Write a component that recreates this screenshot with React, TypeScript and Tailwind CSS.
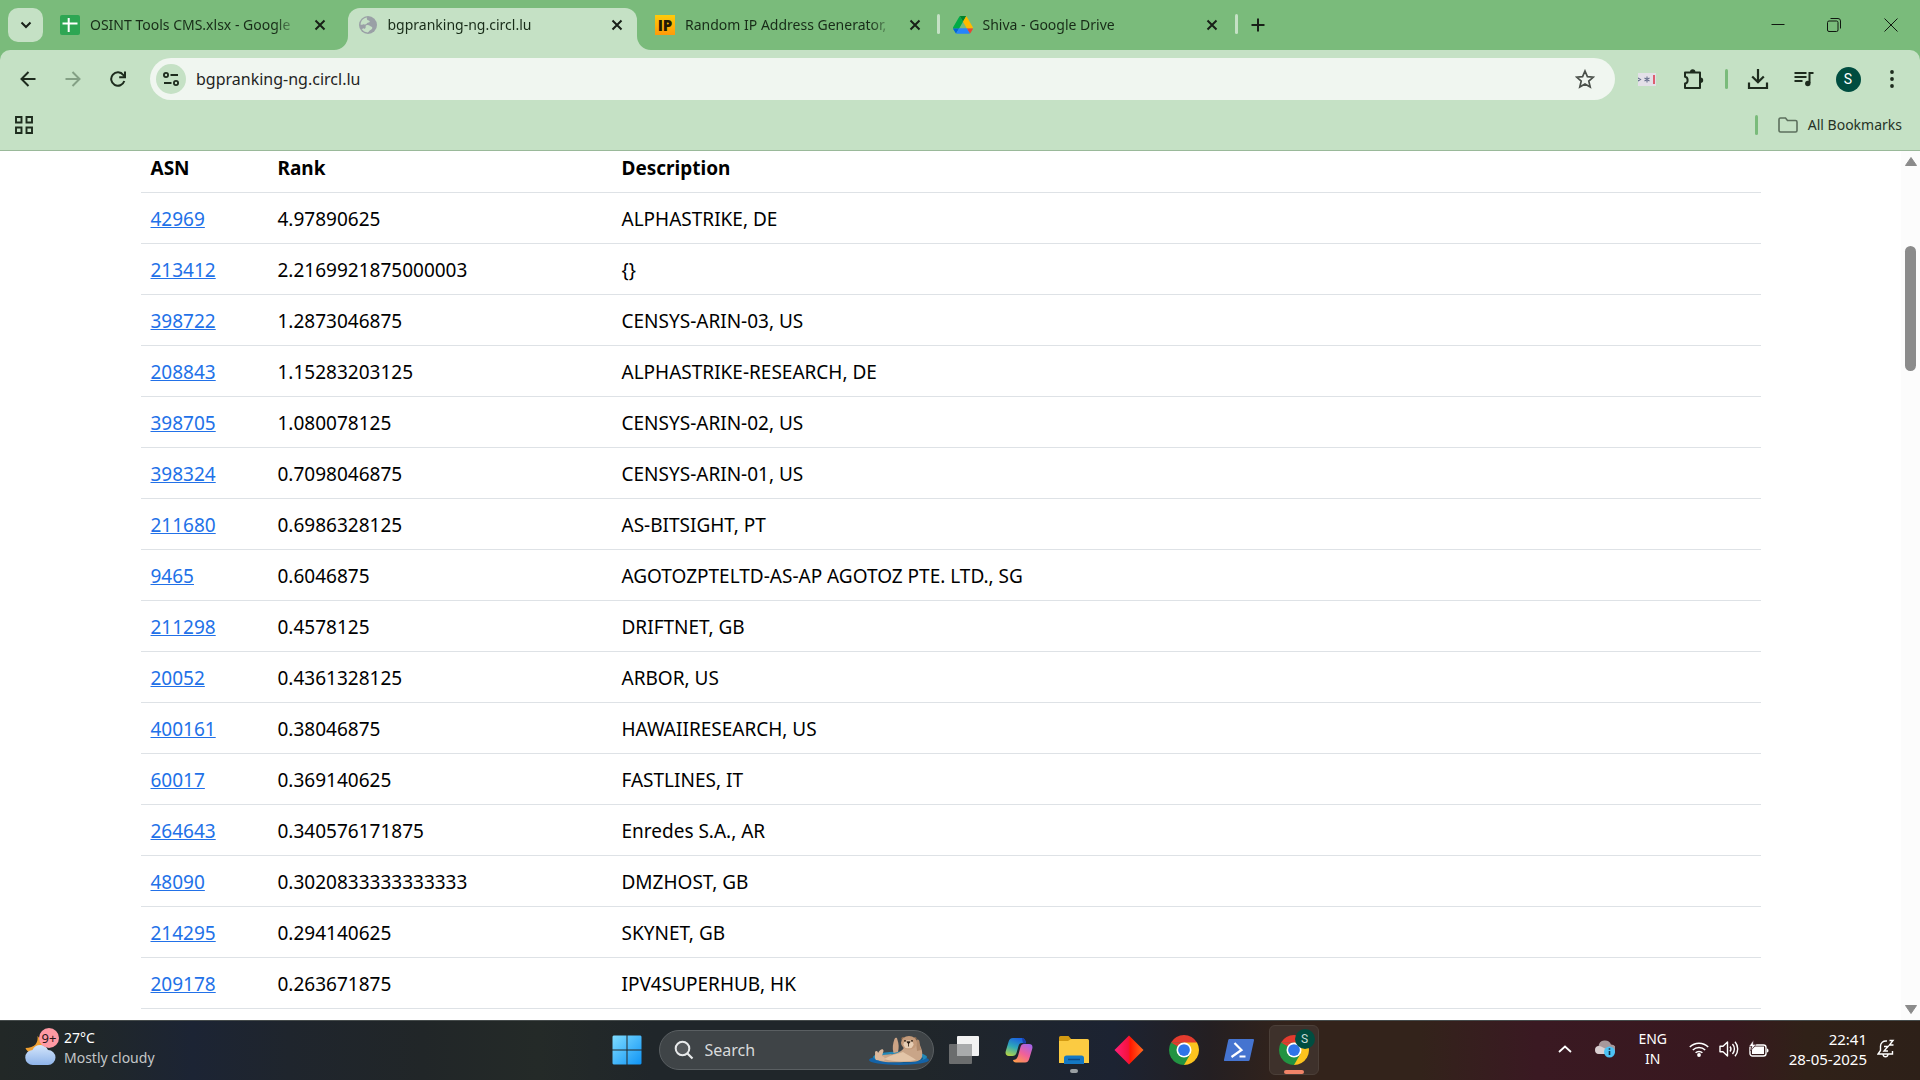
import React from "react";

type Row = { asn: string; rank: string; description: string };

const rows: Row[] = [
  { asn: "42969", rank: "4.97890625", description: "ALPHASTRIKE, DE" },
  { asn: "213412", rank: "2.2169921875000003", description: "{}" },
  { asn: "398722", rank: "1.2873046875", description: "CENSYS-ARIN-03, US" },
  { asn: "208843", rank: "1.15283203125", description: "ALPHASTRIKE-RESEARCH, DE" },
  { asn: "398705", rank: "1.080078125", description: "CENSYS-ARIN-02, US" },
  { asn: "398324", rank: "0.7098046875", description: "CENSYS-ARIN-01, US" },
  { asn: "211680", rank: "0.6986328125", description: "AS-BITSIGHT, PT" },
  { asn: "9465", rank: "0.6046875", description: "AGOTOZPTELTD-AS-AP AGOTOZ PTE. LTD., SG" },
  { asn: "211298", rank: "0.4578125", description: "DRIFTNET, GB" },
  { asn: "20052", rank: "0.4361328125", description: "ARBOR, US" },
  { asn: "400161", rank: "0.38046875", description: "HAWAIIRESEARCH, US" },
  { asn: "60017", rank: "0.369140625", description: "FASTLINES, IT" },
  { asn: "264643", rank: "0.340576171875", description: "Enredes S.A., AR" },
  { asn: "48090", rank: "0.3020833333333333", description: "DMZHOST, GB" },
  { asn: "214295", rank: "0.294140625", description: "SKYNET, GB" },
  { asn: "209178", rank: "0.263671875", description: "IPV4SUPERHUB, HK" },
];

/* ---------- favicons ---------- */

function SheetsIcon() {
  return (
    <svg viewBox="0 0 20 20" className="size-5 shrink-0" aria-hidden="true">
      <rect width="20" height="20" rx="2" fill="#2ea653" />
      <path d="M8.700 3v14M2.500 8.500h15" stroke="#fff" strokeWidth="2" fill="none" />
    </svg>
  );
}

function GlobeIcon() {
  return (
    <svg viewBox="0 0 20 20" className="size-5 shrink-0" aria-hidden="true">
      <circle cx="10" cy="10" r="9" fill="#9aa0a6" />
      <path
        d="M9.200 2.600c-.7.900-.4 1.900.3 2.400.7.500 1.800.3 2.200 1.200.4 1-.9 1.300-1.900 1.500-1 .2-1.100 1.200-1.900 1.600-.9.400-1.800-.3-2.700-.1-.9.200-1.100 1-2.600.5C2.700 6 5.300 3 9.200 2.600zM8.300 10.300c1.300-.4 2.900-.1 3.900.7.800.7 2.200.7 2.100 2-.1 1.400-1.700 1.700-2.600 2.600-.6.700-.9 1.500-2 1.800-2.600-.1-4.700-1.400-6-3.400 1.200-.2 2.700.1 3.600-.7.900-.8-.3-2.500 1-3z"
        fill="#c5e1c5"
      />
    </svg>
  );
}

function IpIcon() {
  return (
    <span className="grid size-5 shrink-0 place-items-center bg-linear-to-b from-[#ffcb0a] to-[#ff9a0a] font-['Open_Sans'] text-[15px] leading-5 font-extrabold text-[#221a05]">
      IP
    </span>
  );
}

function DriveIcon() {
  return (
    <svg viewBox="0 0 87.300 78" className="w-5 shrink-0" aria-hidden="true">
      <path d="m6.600 66.850 3.850 6.650c.8 1.400 1.950 2.500 3.300 3.300l13.750-23.800h-27.500c0 1.550.4 3.100 1.200 4.500z" fill="#0066da" />
      <path d="m43.650 25-13.750-23.800c-1.350.8-2.500 1.900-3.300 3.300l-25.400 44a9.060 9.060 0 0 0 -1.200 4.500h27.500z" fill="#00ac47" />
      <path d="m73.550 76.800c1.350-.8 2.500-1.900 3.300-3.300l1.600-2.750 7.650-13.250c.8-1.400 1.200-2.950 1.200-4.500h-27.502l5.852 11.500z" fill="#ea4335" />
      <path d="m43.650 25 13.750-23.800c-1.350-.8-2.900-1.200-4.500-1.200h-18.500c-1.600 0-3.150.45-4.500 1.200z" fill="#00832d" />
      <path d="m59.800 53h-32.300l-13.750 23.800c1.350.8 2.900 1.200 4.500 1.200h50.800c1.600 0 3.150-.45 4.500-1.200z" fill="#2684fc" />
      <path d="m73.400 26.500-12.700-22c-.8-1.400-1.950-2.500-3.300-3.300l-13.750 23.800 16.150 28h27.450c0-1.550-.4-3.100-1.200-4.500z" fill="#ffba00" />
    </svg>
  );
}

/* ---------- browser tabs ---------- */

function CloseGlyph() {
  return (
    <svg viewBox="0 0 12 12" className="size-3" aria-hidden="true">
      <path d="M1.500 1.500l9 9M10.500 1.500l-9 9" stroke="#182018" strokeWidth="2" fill="none" />
    </svg>
  );
}

type TabProps = { icon: React.ReactNode; title: string; active?: boolean; divider?: boolean };

function Tab({ icon, title, active, divider }: TabProps) {
  return (
    <div className="flex h-full min-w-0 flex-1 items-end">
      <div
        className={
          active
            ? "relative flex h-[42px] min-w-0 flex-1 items-center rounded-t-xl bg-[#c5e1c5] pb-2"
            : "relative flex h-[42px] min-w-0 flex-1 items-center pb-2"
        }
      >
        {active && (
          <>
            <svg viewBox="0 0 14 14" className="absolute bottom-0 -left-[14px] size-[14px]" aria-hidden="true">
              <path d="M14 0v14H0A14 14 0 0 0 14 0z" fill="#c5e1c5" />
            </svg>
            <svg viewBox="0 0 14 14" className="absolute -right-[14px] bottom-0 size-[14px]" aria-hidden="true">
              <path d="M0 0v14h14A14 14 0 0 1 0 0z" fill="#c5e1c5" />
            </svg>
          </>
        )}
        <button type="button" className="flex min-w-0 flex-1 items-center gap-2.5 pl-2.5 text-left">
          {icon}
          <span className="min-w-0 flex-1 overflow-hidden text-sm leading-5 whitespace-nowrap text-[#182c18] [mask-image:linear-gradient(to_right,black_88%,transparent)]">
            {title}
          </span>
        </button>
        <button type="button" aria-label={`Close ${title}`} className="grid w-10 shrink-0 place-items-center">
          <CloseGlyph />
        </button>
      </div>
      <div className="flex h-[42px] w-2 shrink-0 justify-center pt-1.5">
        {divider && <span className="h-5 w-[3px] rounded-full bg-[#c5e1c5]" />}
      </div>
    </div>
  );
}

function TabStrip() {
  return (
    <div className="flex h-[50px] items-center bg-[#7abb7b] pl-2">
      <button type="button" aria-label="Search tabs" className="grid h-[34px] w-[35px] shrink-0 place-items-center rounded-[10px] bg-[#c5e1c5]">
        <svg viewBox="0 0 12 8" className="h-2 w-3" aria-hidden="true">
          <path d="M1.500 1.500L6 6l4.500-4.500" stroke="#182018" strokeWidth="2" fill="none" />
        </svg>
      </button>
      <div className="ml-[7px] flex h-full w-full max-w-[1190px] min-w-0">
        <Tab icon={<SheetsIcon />} title="OSINT Tools CMS.xlsx - Google" />
        <Tab icon={<GlobeIcon />} title="bgpranking-ng.circl.lu" active />
        <Tab icon={<IpIcon />} title="Random IP Address Generator," divider />
        <Tab icon={<DriveIcon />} title="Shiva - Google Drive" divider />
      </div>
      <button type="button" aria-label="New tab" className="grid size-9 shrink-0 place-items-center">
        <svg viewBox="0 0 14 14" className="size-3.5" aria-hidden="true">
          <path d="M7 .5v13M.5 7h13" stroke="#182018" strokeWidth="2" fill="none" />
        </svg>
      </button>
      <div className="ml-auto flex h-full shrink-0">
        <button type="button" aria-label="Minimize" className="grid w-14 place-items-center">
          <svg viewBox="0 0 14 14" className="size-3.5" aria-hidden="true">
            <path d="M.5 6.500h13" stroke="#101810" fill="none" />
          </svg>
        </button>
        <button type="button" aria-label="Restore" className="grid w-14 place-items-center">
          <svg viewBox="0 0 14 14" className="size-3.5" aria-hidden="true">
            <rect x=".5" y="3" width="10.500" height="10.500" rx="1.500" stroke="#101810" fill="none" />
            <path d="M3.500.5h7.500a2.500 2.500 0 0 1 2.500 2.500v7.500" stroke="#101810" fill="none" />
          </svg>
        </button>
        <button type="button" aria-label="Close window" className="grid w-[58px] place-items-center">
          <svg viewBox="0 0 14 14" className="size-3.5" aria-hidden="true">
            <path d="M.5.5l13 13M13.500.5l-13 13" stroke="#101810" fill="none" />
          </svg>
        </button>
      </div>
    </div>
  );
}

/* ---------- toolbar ---------- */

function Toolbar() {
  return (
    <div className="bg-[#7abb7b]">
      <div className="flex h-[58px] items-center rounded-t-[10px] bg-[#c5e1c5] pl-[5px]">
        <button type="button" aria-label="Back" className="grid w-[45px] place-items-center">
          <svg viewBox="0 0 16 16" className="size-4" aria-hidden="true">
            <path d="M15.500 8H2M8.500 1L1.500 8l7 7" stroke="#1d2b1d" strokeWidth="2" fill="none" />
          </svg>
        </button>
        <button type="button" aria-label="Forward" className="grid w-[45px] place-items-center">
          <svg viewBox="0 0 16 16" className="size-4" aria-hidden="true">
            <path d="M.5 8H14M7.500 1l7 7-7 7" stroke="#84a085" strokeWidth="2" fill="none" />
          </svg>
        </button>
        <button type="button" aria-label="Reload" className="grid w-[45px] place-items-center">
          <svg viewBox="0 0 16 16" className="size-4" aria-hidden="true">
            <path d="M14.300 10A6.700 6.700 0 1 1 13.300 4l1 1.300" stroke="#1d2b1d" strokeWidth="2" fill="none" />
            <path d="M15 .5v5.800H9.200" stroke="#1d2b1d" strokeWidth="2" fill="none" />
          </svg>
        </button>
        <div className="ml-2.5 flex h-[42px] flex-1 items-center rounded-full bg-[#f0f6f0] pl-1.5">
          <button type="button" aria-label="View site information" className="grid size-[30px] place-items-center rounded-full bg-[#c5e1c5]">
            <svg viewBox="0 0 16 14" className="h-3.5 w-4" aria-hidden="true">
              <circle cx="3" cy="3" r="2.100" stroke="#1d2b1d" strokeWidth="1.800" fill="none" />
              <circle cx="13" cy="11" r="2.100" stroke="#1d2b1d" strokeWidth="1.800" fill="none" />
              <path d="M7.500 3H15M1 11h7.500" stroke="#1d2b1d" strokeWidth="1.800" fill="none" />
            </svg>
          </button>
          <input
            aria-label="Address and search bar"
            defaultValue="bgpranking-ng.circl.lu"
            className="ml-2.5 min-w-0 flex-1 bg-transparent text-base text-[#1f241f] outline-none"
          />
          <button type="button" aria-label="Bookmark this tab" className="mr-5 grid size-5 place-items-center">
            <svg viewBox="0 0 20 20" className="size-5" aria-hidden="true">
              <path d="M10 2l2.400 5.600 6 .5-4.600 4 1.400 5.900L10 14.900 4.800 18l1.400-5.900-4.600-4 6-.5z" stroke="#4a504a" strokeWidth="1.700" fill="none" />
            </svg>
          </button>
        </div>
        <button type="button" aria-label="Password extension" className="ml-[9px] grid w-[46px] place-items-center">
          <svg viewBox="0 0 18 13" className="h-[13px] w-[18px]" aria-hidden="true">
            <rect width="18" height="13" fill="#e3e0e8" />
            <path d="M9 3.500v6M6.500 5l5 3M11.500 5l-5 3M0 5l2.500 1.500L0 8" stroke="#66708c" strokeWidth="1.100" fill="none" />
            <path d="M16 2v9" stroke="#dc5063" strokeWidth="1.800" />
          </svg>
        </button>
        <button type="button" aria-label="Extensions" className="grid w-[46px] place-items-center">
          <svg viewBox="0 0 22 22" className="size-[22px]" aria-hidden="true">
            <path d="M3 4.500h15v15.500H3v-4.500c3.500-.4 3.500-6.300 0-6.800z" stroke="#1d2b1d" strokeWidth="2" strokeLinejoin="round" fill="none" />
            <path d="M8 4a2.700 2.700 0 0 1 5.400 0zM18.500 9.500a2.700 2.700 0 0 1 0 5.400z" fill="#1d2b1d" />
          </svg>
        </button>
        <span className="ml-[9px] h-5 w-[3px] rounded-full bg-[#7abb7b]" />
        <button type="button" aria-label="Downloads" className="ml-[7px] grid w-[46px] place-items-center">
          <svg viewBox="0 0 22 22" className="size-[22px]" aria-hidden="true">
            <path d="M11 1v12.500M5.200 8.500l5.800 5.800 5.800-5.800M2 14.500v5.500h18v-5.500" stroke="#1d2b1d" strokeWidth="2.200" fill="none" />
          </svg>
        </button>
        <button type="button" aria-label="Media controls" className="grid w-[46px] place-items-center">
          <svg viewBox="0 0 20 16" className="h-4 w-5" aria-hidden="true">
            <path d="M.5 2h12M.5 6h12M.5 10h8" stroke="#1d2b1d" strokeWidth="2" />
            <path d="M15.500 12V2h4" stroke="#1d2b1d" strokeWidth="2" fill="none" />
            <circle cx="13.800" cy="12.500" r="2.700" fill="#1d2b1d" />
          </svg>
        </button>
        <button type="button" aria-label="Profile" className="grid w-[42px] place-items-center">
          <span className="grid size-[25px] place-items-center rounded-full bg-[#004d40] font-['Roboto'] text-sm text-white">S</span>
        </button>
        <button type="button" aria-label="Menu" className="mr-[5px] grid w-[46px] place-items-center">
          <svg viewBox="0 0 4 18" className="h-[18px] w-1" aria-hidden="true">
            <circle cx="2" cy="2" r="1.900" fill="#1d2b1d" />
            <circle cx="2" cy="9" r="1.900" fill="#1d2b1d" />
            <circle cx="2" cy="16" r="1.900" fill="#1d2b1d" />
          </svg>
        </button>
      </div>
      <div className="flex h-[43px] items-center border-b border-[#9ab99a] bg-[#c5e1c5] pr-[18px] pb-2 pl-[15px]">
        <button type="button" aria-label="Apps">
          <svg viewBox="0 0 18 18" className="size-[18px]" aria-hidden="true">
            <path d="M1 1h5.500v5.500H1zM11.500 1H17v5.500h-5.500zM1 11.500h5.500V17H1zM11.500 11.500H17V17h-5.500z" stroke="#1d2b1d" strokeWidth="1.900" fill="none" />
          </svg>
        </button>
        <span className="ml-auto h-5 w-[3px] rounded-full bg-[#7abb7b]" />
        <button type="button" className="ml-5 flex items-center gap-2.5 text-sm leading-5 text-[#263326]">
          <svg viewBox="0 0 20 16" className="h-4 w-5" aria-hidden="true">
            <path d="M1 2.500a1.500 1.500 0 0 1 1.500-1.500h5l2 2.500h8A1.500 1.500 0 0 1 19 5v8.500a1.500 1.500 0 0 1-1.500 1.500h-15A1.500 1.500 0 0 1 1 13.500z" stroke="#5c6f5d" strokeWidth="1.600" fill="none" />
          </svg>
          All Bookmarks
        </button>
      </div>
    </div>
  );
}

/* ---------- page ---------- */

function RankingTable() {
  return (
    <table className="mx-auto w-[calc(100%_-_281px)] table-fixed border-collapse text-left text-[19px] leading-[30px] text-black">
      <colgroup>
        <col className="w-[127px]" />
        <col className="w-[344px]" />
        <col />
      </colgroup>
      <thead>
        <tr className="border-b border-[#dee2e6]">
          <th scope="col" className="px-2.5 pt-0.5 pb-[9px] font-bold">ASN</th>
          <th scope="col" className="px-2.5 pt-0.5 pb-[9px] font-bold">Rank</th>
          <th scope="col" className="px-2.5 pt-0.5 pb-[9px] font-bold">Description</th>
        </tr>
      </thead>
      <tbody>
        {rows.map((row) => (
          <tr key={row.asn} className="border-b border-[#dee2e6]">
            <td className="px-2.5 pt-[11px] pb-[9px]">
              <a href={`#${row.asn}`} className="text-[#2271e8] underline">{row.asn}</a>
            </td>
            <td className="px-2.5 pt-[11px] pb-[9px]">{row.rank}</td>
            <td className="px-2.5 pt-[11px] pb-[9px]">{row.description}</td>
          </tr>
        ))}
      </tbody>
    </table>
  );
}

function ScrollBar() {
  return (
    <div className="flex w-[19px] shrink-0 flex-col items-center bg-[#fcfcfc] py-1.5" aria-hidden="true">
      <svg viewBox="0 0 12 9" className="h-[9px] w-3">
        <path d="M6 0.500L11.500 8.500h-11z" fill="#8b8b8b" stroke="#8b8b8b" strokeLinejoin="round" />
      </svg>
      <div className="flex w-[11px] flex-1 flex-col">
        <span className="grow-[80]" />
        <span className="grow-[125] rounded-full bg-[#8b8b8b]" />
        <span className="grow-[634]" />
      </div>
      <svg viewBox="0 0 12 9" className="h-[9px] w-3">
        <path d="M6 8.500L11.500.5H.5z" fill="#8b8b8b" stroke="#8b8b8b" strokeLinejoin="round" />
      </svg>
    </div>
  );
}

/* ---------- taskbar ---------- */

function Weather() {
  return (
    <button type="button" className="flex items-center gap-[5px] pb-1 pl-[25px] text-left">
      <span className="relative">
        <svg viewBox="0 0 34 36" className="h-9 w-[34px]" aria-hidden="true">
          <defs>
            <linearGradient id="cloud" x1="0" y1="0" x2="0" y2="1">
              <stop offset="0" stopColor="#d5e6fb" />
              <stop offset="1" stopColor="#8fb4ea" />
            </linearGradient>
          </defs>
          <path d="M12.500 6c1 7-3 12-12 12 1.500 4 6 6.500 11 5.500C17 22 19 16 17 11z" fill="#f0a030" />
          <path d="M8 35a7.500 7.500 0 0 1-.5-15 8.500 8.500 0 0 1 15.500 0 7.500 7.500 0 0 1 0 15z" fill="url(#cloud)" />
        </svg>
        <span className="absolute -top-0.5 right-0 grid size-5 place-items-center rounded-full bg-[#ff99a4] text-[13px] leading-5 text-[#2a1518]">9+</span>
      </span>
      <span className="flex flex-col text-sm leading-5">
        <span className="text-white">27°C</span>
        <span className="text-[#c3c6c8]">Mostly cloudy</span>
      </span>
    </button>
  );
}

function Otter() {
  return (
    <svg viewBox="0 0 60 30" className="h-[30px] w-[60px] shrink-0" aria-hidden="true">
      <ellipse cx="30" cy="25" rx="30" ry="5" fill="#1463a8" />
      <ellipse cx="31" cy="22" rx="27" ry="5.500" fill="#2188b8" />
      <ellipse cx="31" cy="23.500" rx="23" ry="4.500" fill="#135a8e" />
      <path d="M47 7c5 3 7 9 6 15-1 4-6 5-14 5-11 0-22 1-28-1-4-2-2-5 3-6 7-1 12 0 18-4 3-2 4-6 6-8z" fill="#c9a588" />
      <path d="M15 24c7-4 13-5 19-7 4 3 10 5 13 8-8 2-24 2-32-1z" fill="#e3c5a8" />
      <path d="M24.500 18c-1.500-5-.5-10 1-14 .8-1.700 2.600-1.500 2.800.3C30 9 30 13 29 17z" fill="#cba385" />
      <path d="M7 25c-2-3-.5-5-1-8 1-2 3-1 3 1 2-4 5.500-5 5.500-2L13 21c3 1 4 3 2 5z" fill="#dcb99c" />
      <path d="M47 6c1-2.500 3.500-1.500 3.500 1l1.500 8-4 1z" fill="#b08a6c" />
      <circle cx="34" cy="3.800" r="1.700" fill="#8f6c50" />
      <circle cx="46" cy="3.800" r="1.700" fill="#8f6c50" />
      <ellipse cx="40" cy="7.800" rx="8" ry="6.800" fill="#c39a7a" />
      <ellipse cx="39.500" cy="9.300" rx="5" ry="4" fill="#e6cdb4" />
      <circle cx="36" cy="5.800" r="0.900" fill="#23180f" />
      <circle cx="43" cy="5.800" r="0.900" fill="#23180f" />
      <path d="M37.800 6.800h3.400l-1.700 2zM39.500 8v3.500" fill="#23180f" stroke="#23180f" strokeWidth=".8" />
    </svg>
  );
}

function ChromeLogo() {
  return (
    <svg viewBox="0 0 48 48" className="size-[30px]" aria-hidden="true">
      <path d="M24 24L3.220 12A24 24 0 0 1 44.780 12z" fill="#e33b2e" />
      <path d="M24 24L44.780 12A24 24 0 0 1 24 48z" fill="#fcc31e" />
      <path d="M24 24L24 48A24 24 0 0 1 3.220 12z" fill="#229342" />
      <path d="M24 12h20.780l-10.400 18z" fill="#fcc31e" />
      <path d="M34.390 30L24 48 13.600 30z" fill="#229342" />
      <path d="M13.600 30L3.220 12H24z" fill="#229342" />
      <path d="M3.220 12H44.780L24 12l-10.400 6z" fill="#e33b2e" />
      <circle cx="24" cy="24" r="12" fill="#fff" />
      <circle cx="24" cy="24" r="9.400" fill="#2f74e8" />
    </svg>
  );
}

type SlotProps = { label: string; children: React.ReactNode };

function Slot({ label, children }: SlotProps) {
  return (
    <button type="button" aria-label={label} className="relative grid size-[50px] shrink-0 place-items-center">
      {children}
    </button>
  );
}

function TaskbarApps() {
  return (
    <div className="flex items-center gap-[5px]">
      <Slot label="Start">
        <svg viewBox="0 0 30 30" className="size-[30px]" aria-hidden="true">
          <defs>
            <linearGradient id="start" x1="0" y1="0" x2="1" y2="1">
              <stop offset="0" stopColor="#7fdcff" />
              <stop offset="1" stopColor="#0f94f5" />
            </linearGradient>
          </defs>
          <path d="M1.500 .5h13v14h-14v-13zM15.500.5h13l1 1v13h-14zM.5 15.500h14v14h-13l-1-1zM15.500 15.500h14v13l-1 1h-13z" fill="url(#start)" />
        </svg>
      </Slot>
      <label className="ml-0.5 flex h-10 w-[275px] items-center rounded-full border border-[#5a5f62] bg-[#3f4447] pr-1 pl-3.5">
        <svg viewBox="0 0 20 20" className="size-5 shrink-0" aria-hidden="true">
          <circle cx="8.500" cy="8.500" r="6.800" stroke="#e8eaeb" strokeWidth="2" fill="#55595c" />
          <path d="M13.500 13.500l5 5" stroke="#e8eaeb" strokeWidth="2.200" />
        </svg>
        <input type="text" placeholder="Search" aria-label="Search" className="ml-[11px] min-w-0 flex-1 bg-transparent text-base text-white placeholder-[#d8dadb] outline-none" />
        <Otter />
      </label>
      <Slot label="Task view">
        <svg viewBox="0 0 30 28" className="h-7 w-[30px]" aria-hidden="true">
          <rect x="8" y="0" width="22" height="20" rx="1" fill="#f2f2f2" />
          <rect x="0" y="8" width="23" height="20" rx="1" fill="#6b6d6e" />
          <path d="M8 8h15v12H8z" fill="#a9abac" />
        </svg>
      </Slot>
      <Slot label="Copilot">
        <svg viewBox="0 0 28 26" className="h-[26px] w-7" aria-hidden="true">
          <defs>
            <linearGradient id="copilotLeft" x1="0.600" y1="0" x2="0.200" y2="1">
              <stop offset="0" stopColor="#1b62e0" />
              <stop offset="0.500" stopColor="#2fa8b8" />
              <stop offset="1" stopColor="#b5d445" />
            </linearGradient>
            <linearGradient id="copilotRight" x1="0.800" y1="0" x2="0.200" y2="1">
              <stop offset="0" stopColor="#a564e8" />
              <stop offset="0.500" stopColor="#f0609a" />
              <stop offset="1" stopColor="#ff9a4d" />
            </linearGradient>
          </defs>
          <path d="M8 1h9c2 0 3 1.500 3.500 3L21 6h-4c-2 0-3 1-3.500 3l-2 7c-.6 2-2 3-4 3H4c-3 0-4-2-3.200-5l2.700-9C4.200 2.500 5.500 1 8 1z" fill="url(#copilotLeft)" />
          <path d="M20 25.500h-9c-2 0-2.700-1-3-2.500 2 0 4-1 5-4l2.500-9c.6-2 1.500-3 3.500-3h5c3 0 4 2 3.200 5l-2.700 9c-.8 3-2 4.500-4.500 4.500z" fill="url(#copilotRight)" />
          <path d="M17 1c2 0 3 1.500 3.500 3l.5 2.500h-3z" fill="#173fae" />
        </svg>
      </Slot>
      <Slot label="File Explorer">
        <svg viewBox="0 0 30 28" className="h-7 w-[30px]" aria-hidden="true">
          <path d="M0 1.500A1.500 1.500 0 0 1 1.500 0h8l3 3.500L10 7H0z" fill="#d39a12" />
          <path d="M0 5h9l3-2h16.500A1.500 1.500 0 0 1 30 4.500V27H0z" fill="#fbcb42" />
          <path d="M5 28v-6a2.500 2.500 0 0 1 2.500-2.500h15A2.500 2.500 0 0 1 25 22v6z" fill="#1478c4" />
          <path d="M9 23.500h12" stroke="#0c4a86" strokeWidth="1.500" />
        </svg>
        <span className="absolute bottom-0.5 h-1 w-2 rounded-full bg-[#9a9fa3]" />
      </Slot>
      <Slot label="Diamond app">
        <svg viewBox="0 0 30 30" className="size-[30px]" aria-hidden="true">
          <defs>
            <linearGradient id="diamond" x1="0" y1="0" x2="1" y2="0">
              <stop offset="0" stopColor="#ff1f7a" />
              <stop offset="0.480" stopColor="#f5123c" />
              <stop offset="0.550" stopColor="#ff1a00" />
              <stop offset="1" stopColor="#ff6a1f" />
            </linearGradient>
          </defs>
          <path d="M15 0.500L29.500 15 15 29.500.5 15z" fill="url(#diamond)" />
        </svg>
      </Slot>
      <Slot label="Google Chrome">
        <ChromeLogo />
      </Slot>
      <Slot label="PowerShell">
        <svg viewBox="0 0 30 22" className="h-[22px] w-[30px]" aria-hidden="true">
          <path d="M5.500 0H29a1 1 0 0 1 1 1.200l-4.300 19.600A1.500 1.500 0 0 1 24.200 22H1a1 1 0 0 1-1-1.200L4.200 1.200A1.500 1.500 0 0 1 5.500 0z" fill="#4574d0" />
          <path d="M10.500 4l7 7-10 7M15.500 17.500h6" stroke="#fff" strokeWidth="2.200" fill="none" />
        </svg>
      </Slot>
      <button type="button" aria-label="Google Chrome, profile S" className="relative grid size-[50px] shrink-0 place-items-center rounded-md border border-[#4b3f38] bg-[#3e312b]">
        <ChromeLogo />
        <span className="absolute top-[3px] right-[3px] grid size-5 place-items-center rounded-full bg-[#004d40] font-['Roboto'] text-xs text-[#c8dcd8]">S</span>
        <span className="absolute bottom-0 h-1 w-5 rounded-full bg-[#f08468]" />
      </button>
    </div>
  );
}

function Tray() {
  return (
    <div className="flex items-center justify-end pr-[25px] pb-0.5 text-white">
      <button type="button" aria-label="Show hidden icons" className="grid w-10 place-items-center">
        <svg viewBox="0 0 14 8" className="h-2 w-3.5" aria-hidden="true">
          <path d="M1 7l6-5.500L13 7" stroke="#fff" strokeWidth="1.800" fill="none" />
        </svg>
      </button>
      <button type="button" aria-label="OneDrive" className="grid w-10 place-items-center">
        <svg viewBox="0 0 20 18" className="h-[18px] w-5" aria-hidden="true">
          <path d="M4 14a4 4 0 0 1-.5-7.800A6.500 6.500 0 0 1 16 4.500a4.800 4.800 0 0 1 1 9.500z" fill="#a7989b" />
          <path d="M4 14a4 4 0 0 1 0-8c3 0 5 3 8 3v5z" fill="#d9cfd1" />
          <circle cx="14.500" cy="12" r="5.500" fill="#4cc2f4" />
          <path d="M14.500 11v4M14.500 8.300v1.500" stroke="#0e2f45" strokeWidth="1.600" />
        </svg>
      </button>
      <button type="button" className="ml-1 w-12 text-center text-sm leading-5">
        ENG
        <br />
        IN
      </button>
      <button type="button" aria-label="Network, volume and battery" className="ml-3 flex items-center gap-2.5">
        <svg viewBox="0 0 20 16" className="h-4 w-5" aria-hidden="true">
          <path d="M.8 6a13 13 0 0 1 18.400 0M3.800 9a8.800 8.800 0 0 1 12.400 0M6.600 11.800a4.800 4.800 0 0 1 6.800 0" stroke="#fff" strokeWidth="1.500" fill="none" />
          <circle cx="10" cy="14" r="1.900" fill="#fff" />
        </svg>
        <svg viewBox="0 0 20 18" className="h-[18px] w-5" aria-hidden="true">
          <path d="M1 6.200h3L8.500 2v14L4 11.800H1z" stroke="#fff" strokeWidth="1.400" strokeLinejoin="round" fill="none" />
          <path d="M11 6.500a4 4 0 0 1 0 5M13.500 4a7.500 7.500 0 0 1 0 10M16 1.800a11 11 0 0 1 0 14.400" stroke="#fff" strokeWidth="1.400" fill="none" />
        </svg>
        <svg viewBox="0 0 20 18" className="h-[18px] w-5" aria-hidden="true">
          <rect x="1" y="5" width="16" height="11" rx="2.500" stroke="#fff" strokeWidth="1.400" fill="none" />
          <path d="M3 14V9l3-2.500h9V14zM18 8.500c2 0 2 4 0 4z" fill="#fff" />
          <path d="M4.500 0L0 6.500h3L1.500 11 7 4.500H4.200z" fill="#fff" stroke="#3a1820" strokeWidth=".6" />
        </svg>
      </button>
      <button type="button" className="ml-5 text-right text-[15px] leading-5">
        22:41
        <br />
        28-05-2025
      </button>
      <button type="button" aria-label="Notifications" className="ml-2.5">
        <svg viewBox="0 0 18 20" className="h-5 w-[18px]" aria-hidden="true">
          <path d="M10 2C6 1.500 3.500 4 3.500 7v4.500L1 15h14.500v-3M6 15.500c.5 3 4.500 3 5 0" stroke="#fff" strokeWidth="1.400" fill="none" />
          <path d="M7 7.500h4L7 12h4M12.500 1.500H16L12.500 6H16.500" stroke="#fff" strokeWidth="1.400" fill="none" />
        </svg>
      </button>
    </div>
  );
}

function Taskbar() {
  return (
    <footer className="grid h-[60px] shrink-0 grid-cols-[1fr_auto_1fr] items-stretch bg-[linear-gradient(to_right,#222827_0%,#20272a_5%,#1c2434_10%,#1f252d_15%,#212628_22%,#242a28_28%,#20262a_34%,#20262a_48%,#1c2332_58%,#241f22_63%,#33231b_67%,#33231b_74%,#3a1922_80%,#38181f_90%,#302118_94%,#2d2018_100%)] inset-shadow-[0_1px_0_#454b4b]">
      <Weather />
      <TaskbarApps />
      <Tray />
    </footer>
  );
}

export default function App() {
  return (
    <div className="flex h-screen flex-col overflow-hidden bg-white font-['Noto_Sans',sans-serif]">
      <header className="shrink-0">
        <TabStrip />
        <Toolbar />
      </header>
      <div className="flex min-h-0 flex-1">
        <main className="min-w-0 flex-1 overflow-hidden">
          <RankingTable />
        </main>
        <ScrollBar />
      </div>
      <Taskbar />
    </div>
  );
}
